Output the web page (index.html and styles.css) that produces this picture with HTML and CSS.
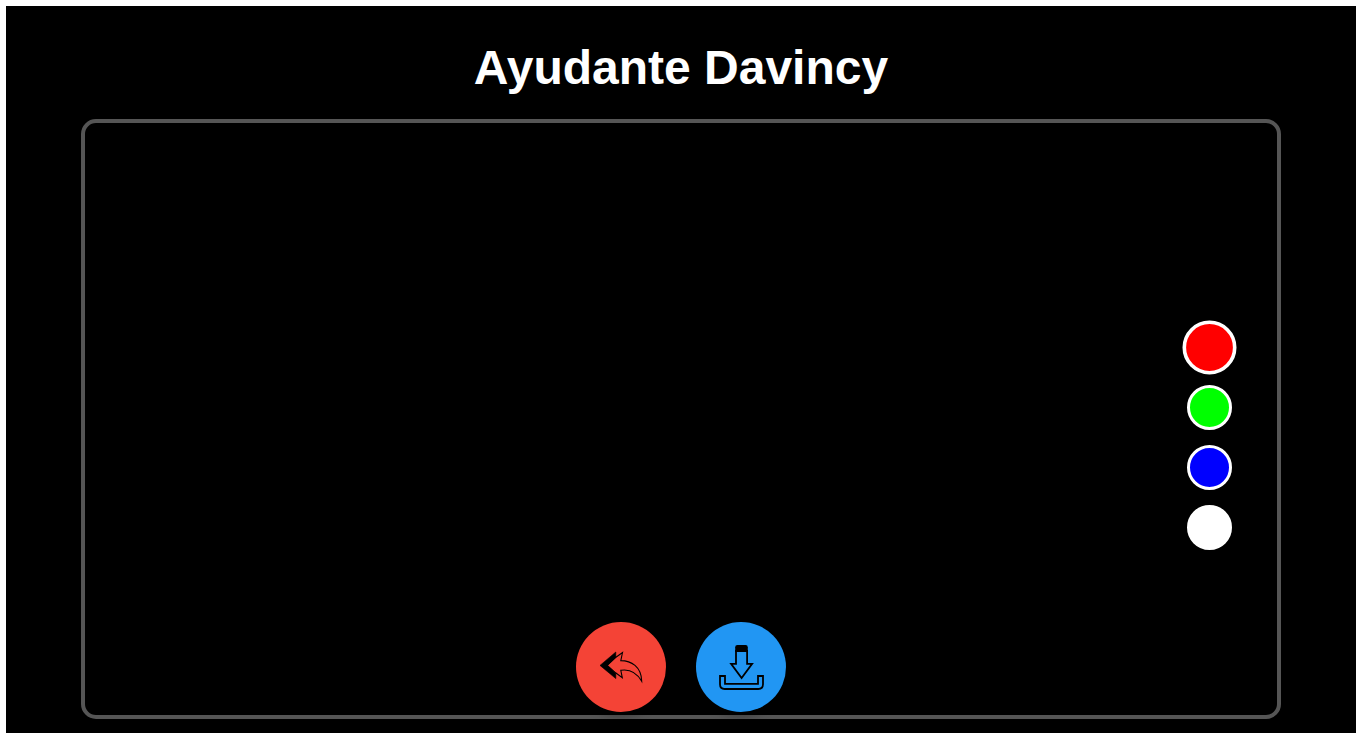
FILE: index.html
```html
<!DOCTYPE html>
<html lang="es">
<head>
<meta charset="utf-8">
<meta name="viewport" content="width=device-width, initial-scale=1">
<title>Ayudante Davincy</title>
<link rel="stylesheet" href="styles.css">
</head>
<body>
<main class="app">
  <h1 class="title">Ayudante Davincy</h1>
  <section class="board" aria-label="Lienzo">
    <div class="palette" role="group" aria-label="Colores">
      <button type="button" class="swatch swatch-red selected" aria-label="Rojo" aria-pressed="true"></button>
      <button type="button" class="swatch swatch-green" aria-label="Verde" aria-pressed="false"></button>
      <button type="button" class="swatch swatch-blue" aria-label="Azul" aria-pressed="false"></button>
      <button type="button" class="swatch swatch-white" aria-label="Blanco" aria-pressed="false"></button>
    </div>
    <div class="actions">
      <button type="button" class="action action-undo" aria-label="Deshacer">
        <svg class="icon" viewBox="0 0 90 90" aria-hidden="true">
          <path d="M24 43.4 L39.8 30 L39.8 35.2 L31.4 43.4 L39.8 51.4 L39.8 56.6 Z" fill="#000" stroke="#000" stroke-width=".6"/>
          <path d="M31.2 43.4 L39.6 35.5 L46.5 30.6 L44.8 38.6 C55 38.6 65.5 44.5 65.7 59.3 C60.5 50.2 53 47 44.8 48.3 L46.3 55.8 L39.6 50.8 Z" fill="none" stroke="#000" stroke-width="1.1"/>
        </svg>
      </button>
      <button type="button" class="action action-save" aria-label="Descargar">
        <svg class="icon" viewBox="0 0 90 90" aria-hidden="true">
          <path d="M39.2 30 V25.2 Q39.2 23 41.4 23 H49.6 Q51.8 23 51.8 25.2 V30 Z" fill="#000"/>
          <path d="M40 28 V41.8 H35.1 L45.6 56 L56.1 41.8 H51.1 V28 M24 54 H29 V61.8 H62 V54 H67 V62.3 Q67 67 62.3 67 H28.7 Q24 67 24 62.3 Z" fill="none" stroke="#000" stroke-width="1.8"/>
        </svg>
      </button>
    </div>
  </section>
</main>
</body>
</html>
```
FILE: styles.css
```css
* {
  box-sizing: border-box;
}

body {
  margin: 0;
  min-height: 100vh;
  display: flex;
  border: 6px solid #fff;
  background: #000;
  color: #fff;
  font-family: Arial, "Liberation Sans", sans-serif;
}

.app {
  flex: 1;
  display: flex;
  flex-direction: column;
  align-items: center;
  gap: 24px;
  padding: 34px 20px 14px;
}

.title {
  margin: 0;
  font-size: 48px;
  line-height: 55px;
  text-align: center;
}

.board {
  width: 100%;
  max-width: 1200px;
  min-height: 600px;
  display: flex;
  flex-direction: column;
  justify-content: flex-end;
  gap: 72px;
  padding-bottom: 3px;
  border: 4px solid #555;
  border-radius: 15px;
}

.palette {
  align-self: flex-end;
  display: flex;
  flex-direction: column;
  gap: 15px;
  margin-right: 45px;
}

.swatch {
  width: 45px;
  height: 45px;
  padding: 0;
  border: 3px solid #fff;
  border-radius: 50%;
  cursor: pointer;
}

.swatch.selected {
  transform: scale(1.2);
}

.swatch-red { background: #f00; }
.swatch-green { background: #0f0; }
.swatch-blue { background: #00f; }
.swatch-white { background: #fff; }

.actions {
  display: flex;
  justify-content: center;
  gap: 30px;
}

.action {
  width: 90px;
  height: 90px;
  padding: 0;
  border: 0;
  border-radius: 50%;
  box-shadow: 0 4px 8px rgba(0, 0, 0, 0.3);
  cursor: pointer;
}

.action-undo { background: #f44336; }
.action-save { background: #2196f3; }

.icon {
  display: block;
  width: 100%;
  height: 100%;
}
```
